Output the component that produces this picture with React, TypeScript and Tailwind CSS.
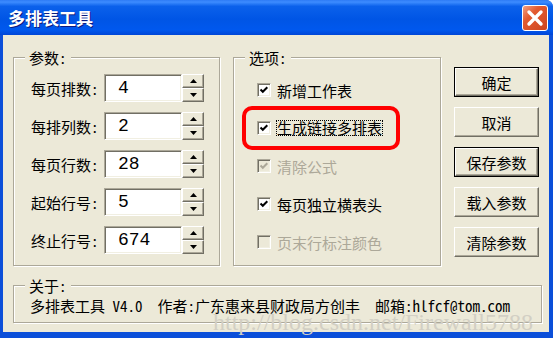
import type { ReactNode } from "react";

const raised =
  "flex items-center justify-center border border-t-white border-l-white border-b-[#716F64] border-r-[#716F64] shadow-[inset_-1px_-1px_0_#ACA899] bg-[#ECE9D8]";
const sunken =
  "border border-t-[#ACA899] border-l-[#ACA899] border-b-white border-r-white shadow-[inset_1px_1px_0_#716F64,inset_-1px_-1px_0_#F1EFE2]";

function GroupBox({
  title,
  className,
  children,
}: {
  title: string;
  className: string;
  children: ReactNode;
}) {
  return (
    <div
      className={`relative border border-[#ACA899] shadow-[inset_1px_1px_0_#fff,1px_1px_0_#fff] ${className}`}
    >
      <span className="absolute -top-[8px] left-[11px] bg-[#ECE9D8] px-[4px] leading-[15px]">
        {title}
      </span>
      {children}
    </div>
  );
}

function Spinner() {
  return (
    <div className="flex h-[28px] w-[22px] flex-col">
      <div className={`h-[14px] ${raised}`}>
        <svg width="7" height="4" viewBox="0 0 7 4">
          <path d="M3.5 0L7 4H0z" fill="#000" />
        </svg>
      </div>
      <div className={`h-[14px] ${raised}`}>
        <svg width="7" height="4" viewBox="0 0 7 4">
          <path d="M0 0H7L3.5 4z" fill="#000" />
        </svg>
      </div>
    </div>
  );
}

function NumField({ label, value }: { label: string; value: string }) {
  return (
    <div className="flex h-[28px] items-center">
      <span className="w-[73px]">{label}</span>
      <div
        className={`flex h-[28px] w-[78px] items-center bg-white pl-[13px] font-['Liberation_Mono',monospace] text-[18px] ${sunken}`}
      >
        {value}
      </div>
      <Spinner />
    </div>
  );
}

function Option({
  label,
  checked = false,
  disabled = false,
  focused = false,
}: {
  label: string;
  checked?: boolean;
  disabled?: boolean;
  focused?: boolean;
}) {
  return (
    <div className="flex h-[28px] items-center">
      <span
        className={`h-[14px] w-[14px] ${sunken} ${disabled ? "bg-[#ECE9D8]" : "bg-white"}`}
      >
        {checked && (
          <svg className="h-full w-full" viewBox="0 0 12 12">
            <path
              d="M2.5 5.5L4.8 7.8L9.3 3.2"
              fill="none"
              stroke={disabled ? "#ACA899" : "#000"}
              strokeWidth="2"
            />
          </svg>
        )}
      </span>
      {focused ? (
        <span className="ml-[5px] border border-dotted border-black leading-[14px]">
          {label}
        </span>
      ) : (
        <span className={`ml-[6px] ${disabled ? "text-[#ACA899]" : ""}`}>
          {label}
        </span>
      )}
    </div>
  );
}

function DlgButton({ label, isDefault = false }: { label: string; isDefault?: boolean }) {
  return (
    <div className={`h-[30px] w-[85px] ${isDefault ? "border border-black" : ""}`}>
      <div className={`h-full w-full ${raised}`}>{label}</div>
    </div>
  );
}

export default function App() {
  return (
    <div className="relative flex h-[338px] w-[556px] bg-white font-['Noto_Sans_Mono_CJK_SC','Noto_Sans_CJK_SC',sans-serif] text-[15px] leading-[15px] text-black">
      <div className="flex h-[338px] w-[553px] flex-col rounded-tr-[7px] bg-[#0B4FD9]">
        {/* title bar */}
        <div className="flex h-[35px] rounded-tr-[7px] bg-[linear-gradient(to_bottom,#2E7BF5_0%,#3D8CFF_6%,#0B61EB_18%,#0055E5_55%,#0058EE_85%,#0046D6_100%)] pl-[8px] pr-[5px]">
          <span className="mt-[9px] text-[17px] leading-[18px] font-bold text-white [text-shadow:1px_1px_#0A1C80]">
            多排表工具
          </span>
          <div className="ml-auto mt-[5px] flex h-[26px] w-[26px] items-center justify-center rounded-[3px] border border-white bg-[linear-gradient(135deg,#F2A184_0%,#E35A30_35%,#CC4520_100%)]">
            <svg width="18" height="18" viewBox="0 0 18 18">
              <path
                d="M3 3L15 15M15 3L3 15"
                stroke="#fff"
                strokeWidth="3.4"
                strokeLinecap="round"
              />
            </svg>
          </div>
        </div>

        {/* client area */}
        <div className="ml-[3px] mr-[4px] flex h-[297px] flex-col bg-[#ECE9D8] pl-[10px] pt-[22px]">
          <div className="flex items-start">
            <GroupBox title="参数:" className="h-[209px] w-[207px] pl-[17px] pt-[16px]">
              <div className="flex flex-col gap-[10px]">
                <NumField label="每页排数:" value="4" />
                <NumField label="每排列数:" value="2" />
                <NumField label="每页行数:" value="28" />
                <NumField label="起始行号:" value="5" />
                <NumField label="终止行号:" value="674" />
              </div>
            </GroupBox>

            <GroupBox title="选项:" className="ml-[13px] h-[209px] w-[208px] pl-[23px] pt-[18px]">
              <div className="flex flex-col gap-[10px]">
                <Option label="新增工作表" checked />
                <div className="relative">
                  <Option label="生成链接多排表" checked focused />
                  <div className="pointer-events-none absolute -left-[15px] -top-[8px] h-[44px] w-[158px] rounded-[10px] border-[4px] border-[#FF0000]" />
                </div>
                <Option label="清除公式" checked disabled />
                <Option label="每页独立横表头" checked />
                <Option label="页末行标注颜色" disabled />
              </div>
            </GroupBox>

            <div className="ml-[13px] mt-[10px] flex flex-col gap-[10px]">
              <DlgButton label="确定" isDefault />
              <DlgButton label="取消" />
              <DlgButton label="保存参数" isDefault />
              <DlgButton label="载入参数" />
              <DlgButton label="清除参数" />
            </div>
          </div>

          <GroupBox title="关于:" className="mt-[19px] h-[38px] w-[529px] pl-[16px] pt-[12px]">
            <p className="whitespace-pre">
              {"多排表工具 V4.0  作者:广东惠来县财政局方创丰  邮箱:hlfcf@tom.com"}
            </p>
          </GroupBox>
        </div>
      </div>

      <span className="pointer-events-none absolute left-[213px] top-[310px] select-none font-['Liberation_Serif',serif] text-[24px] leading-[24px] text-[#D2CFC4]">
        http://blog.csdn.net/Firewall5788
      </span>
    </div>
  );
}
